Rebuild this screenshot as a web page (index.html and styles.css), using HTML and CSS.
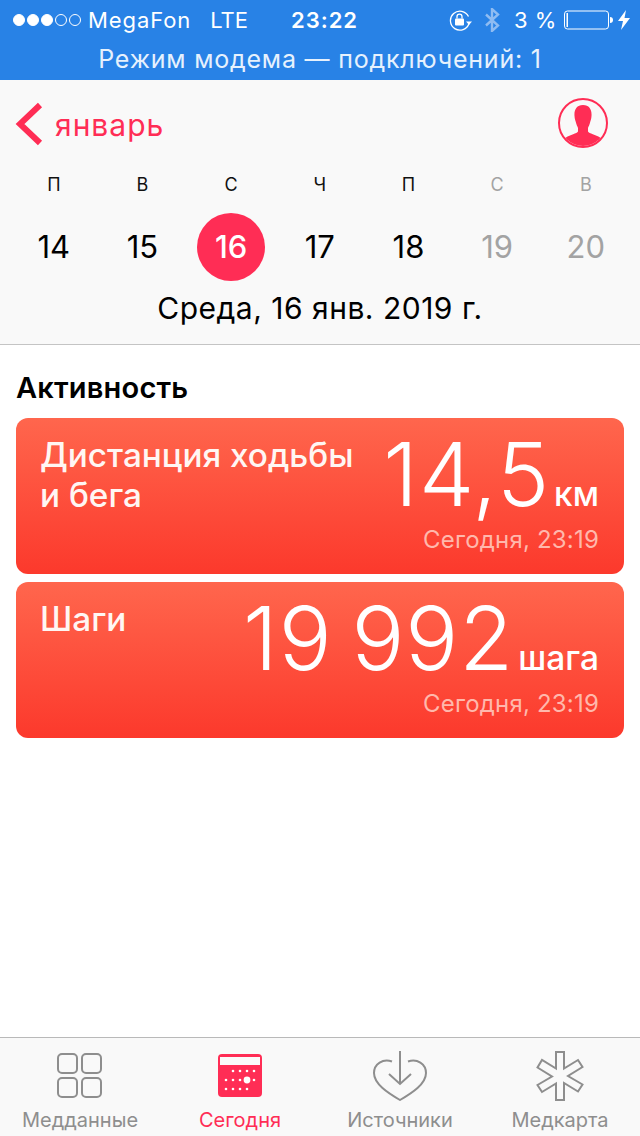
FILE: index.html
```html
<!DOCTYPE html>
<html lang="ru">
<head>
    <meta charset="UTF-8">
    <meta name="viewport" content="width=device-width, initial-scale=1.0">
    <title>Сегодня</title>
    <link rel="stylesheet" href="styles.css">
</head>
<body>
<div class="screen">

    <div class="topbar">
        <div class="status">
            <div class="status-left">
                <span class="dots"><i class="on"></i><i class="on"></i><i class="on"></i><i></i><i></i></span>
                <span class="carrier">MegaFon</span>
                <span class="net">LTE</span>
            </div>
            <div class="clock">23:22</div>
            <div class="status-right">
                <svg class="lock" width="26" height="22" viewBox="0 0 26 22">
                    <path d="M21 14.5A9.5 9.5 0 1 1 20.5 7.5" fill="none" stroke="#fff" stroke-width="1.3"/>
                    <path d="M18 12.5h6l-3 3.4z" fill="#fff"/>
                    <rect x="7" y="9.5" width="9" height="7" rx="1" fill="#fff"/>
                    <path d="M9 9.5V7.6a2.5 2.5 0 0 1 5 0v1.9" fill="none" stroke="#fff" stroke-width="1.3"/>
                </svg>
                <svg class="bt" width="16" height="24" viewBox="0 0 16 24">
                    <path d="M2 6.5l12 11-6 5.5V1l6 5.5-12 11" fill="none" stroke="#8fbcf2" stroke-width="2.4"/>
                </svg>
                <span class="percent">3 %</span>
                <svg class="battery" width="50" height="20" viewBox="0 0 50 20">
                    <rect x="0.5" y="1" width="44" height="18" rx="3" fill="none" stroke="#fff" stroke-width="1"/>
                    <rect x="2.5" y="3" width="1.5" height="14" fill="#fff"/>
                    <path d="M46 7c2 0 3 1 3 3s-1 3-3 3z" fill="#fff"/>
                </svg>
                <svg class="bolt" width="12" height="20" viewBox="0 0 12 20">
                    <path d="M8 0L0 11h5l-2 9 9-12H6.500z" fill="#fff"/>
                </svg>
            </div>
        </div>
        <div class="hotspot">Режим модема — подключений: 1</div>
    </div>

    <div class="calendar">
        <div class="cal-nav">
            <div class="back">
                <svg width="28" height="44" viewBox="0 0 28 44">
                    <path d="M25 3L5 22l20 19" fill="none" stroke="#ff2d55" stroke-width="6"/>
                </svg>
                <span>январь</span>
            </div>
            <svg class="profile" width="52" height="52" viewBox="0 0 52 52">
                <defs>
                    <clipPath id="ring"><circle cx="26" cy="26" r="23"/></clipPath>
                </defs>
                <circle cx="26" cy="26" r="24" fill="none" stroke="#ff2d55" stroke-width="2"/>
                <path clip-path="url(#ring)" d="M26 8c-6.500 0-9 5-8.500 11 .2 3 .8 4 1.300 6 .5 2.500 1.700 4.500 2.200 6v3.500c-1 2-8 3.500-12 6-2 1-3 3-3 6v6h40v-6c0-3-1-5-3-6-4-2.500-11-4-12-6V31c.5-1.500 1.700-3.500 2.200-6 .5-2 1.100-3 1.300-6 .5-6-2-11-8.500-11z" fill="#ff2d55"/>
            </svg>
        </div>
        <div class="week week-names">
            <span>П</span><span>В</span><span>С</span><span>Ч</span><span>П</span><span class="off">С</span><span class="off">В</span>
        </div>
        <div class="week week-days">
            <span>14</span><span>15</span><span class="today">16</span><span>17</span><span>18</span><span class="off">19</span><span class="off">20</span>
        </div>
        <div class="full-date">Среда, 16 янв. 2019 г.</div>
    </div>

    <div class="content">
        <h2>Активность</h2>
        <div class="card">
            <div class="card-title">Дистанция ходьбы<br>и бега</div>
            <div class="card-data">
                <div class="value">14,5<span class="unit">км</span></div>
                <div class="when">Сегодня, 23:19</div>
            </div>
        </div>
        <div class="card">
            <div class="card-title">Шаги</div>
            <div class="card-data">
                <div class="value">19 992<span class="unit">шага</span></div>
                <div class="when">Сегодня, 23:19</div>
            </div>
        </div>
    </div>

    <div class="tabs">
        <div class="tab">
            <svg width="46" height="46" viewBox="0 0 46 46" fill="none" stroke="#8e8e8e" stroke-width="2">
                <rect x="1" y="1" width="19" height="19" rx="4"/>
                <rect x="25" y="1" width="19" height="19" rx="4"/>
                <rect x="1" y="25" width="19" height="19" rx="4"/>
                <rect x="25" y="25" width="19" height="19" rx="4"/>
            </svg>
            <span>Медданные</span>
        </div>
        <div class="tab active">
            <svg width="46" height="46" viewBox="0 0 46 46">
                <rect x="1" y="1" width="44" height="43" rx="4" fill="#ff2d55"/>
                <rect x="3" y="4" width="40" height="8" fill="#fafafa"/>
                <g fill="#fff">
                    <circle cx="16" cy="18" r="1.300"/><circle cx="23" cy="18" r="1.300"/><circle cx="30" cy="18" r="1.300"/><circle cx="37" cy="18" r="1.300"/>
                    <circle cx="9" cy="27" r="1.300"/><circle cx="16" cy="27" r="1.300"/><circle cx="23" cy="27" r="1.300"/><circle cx="30" cy="27" r="3.400"/><circle cx="37" cy="27" r="1.300"/>
                    <circle cx="9" cy="36" r="1.300"/><circle cx="16" cy="36" r="1.300"/><circle cx="23" cy="36" r="1.300"/><circle cx="30" cy="36" r="1.300"/>
                </g>
            </svg>
            <span>Сегодня</span>
        </div>
        <div class="tab">
            <svg class="tall" width="56" height="50" viewBox="0 0 56 50" fill="none" stroke="#8e8e8e" stroke-width="2">
                <path d="M20 10.500C11 7 2 13 2 22c0 11 14 20 26 27 12-7 26-16 26-27 0-9-9-15-18-11.500"/>
                <path d="M28 0v33M17 23l11 10 11-10"/>
            </svg>
            <span>Источники</span>
        </div>
        <div class="tab">
            <svg class="tall" width="50" height="50" viewBox="0 0 50 50" fill="none" stroke="#8e8e8e" stroke-width="2">
                <path d="M21 1h8v16.500l14-8.500 4.500 7-14.500 9 14.500 8.500-4.500 7-14-8.500V49h-8V32.500L7 41l-4.500-7L17 25.500 2.500 16.500 7 9l14 8.500z"/>
            </svg>
            <span>Медкарта</span>
        </div>
    </div>

</div>
</body>
</html>
```

FILE: styles.css
```css
* {
    box-sizing: border-box;
}

body {
    margin: 0;
    padding: 0;
    font-family: 'Inter', 'Noto Sans', sans-serif;
    background-color: #fff;
}

.screen {
    width: 640px;
    height: 1136px;
    display: flex;
    flex-direction: column;
    overflow: hidden;
}

.topbar {
    height: 80px;
    background-color: #2882e6;
    color: #fff;
}

.status {
    height: 40px;
    padding: 0 10px 0 13px;
    display: flex;
    align-items: center;
    justify-content: space-between;
    font-size: 22px;
}

.status-left {
    width: 256px;
    display: flex;
    align-items: center;
}

.dots {
    display: flex;
    gap: 2px;
    margin-right: 7px;
}

.dots i {
    width: 12px;
    height: 12px;
    border-radius: 50%;
    border: 1px solid #fff;
}

.dots i.on {
    background-color: #fff;
}

.carrier {
    letter-spacing: 0.9px;
}

.net {
    margin-left: 19px;
}

.clock {
    font-weight: 600;
    letter-spacing: 1px;
}

.status-right {
    width: 250px;
    display: flex;
    align-items: center;
    justify-content: flex-end;
}

.status-right .bt {
    margin: 0 14px 0 10px;
}

.percent {
    margin-right: 7px;
    letter-spacing: 0.5px;
}

.battery {
    margin-right: 4px;
}

.hotspot {
    height: 40px;
    line-height: 38px;
    text-align: center;
    font-size: 25px;
    letter-spacing: 0.8px;
    color: #e6f1fd;
}

.calendar {
    height: 265px;
    background-color: #f9f9f9;
    border-bottom: 1px solid #c4c4c4;
}

.cal-nav {
    height: 86px;
    padding: 0 31px 0 15px;
    display: flex;
    align-items: center;
    justify-content: space-between;
}

.back {
    display: flex;
    align-items: center;
    gap: 12px;
    padding-top: 2px;
    color: #ff2d55;
    font-size: 30px;
    letter-spacing: 1px;
}

.back span {
    margin-top: 2px;
}

.week {
    display: grid;
    grid-template-columns: repeat(7, 88.67px);
    padding-left: 9.5px;
    text-align: center;
}

.week-names {
    height: 40px;
    margin-top: -1px;
    font-size: 18px;
    line-height: 40px;
    color: #111;
}

.week-days {
    height: 68px;
    margin-top: 8px;
    font-size: 31px;
    line-height: 68px;
    color: #000;
}

.week .off {
    color: #a3a3a3;
}

.week-days .today {
    width: 68px;
    height: 68px;
    margin: 0 auto;
    border-radius: 50%;
    background-color: #ff2d55;
    color: #fff;
    font-weight: 500;
}

.full-date {
    margin-top: 5px;
    text-align: center;
    font-size: 30px;
    line-height: 44px;
    letter-spacing: 0.5px;
    color: #000;
}

.content {
    flex: 1;
    padding: 0 16px;
}

.content h2 {
    margin: 25px 0 12px 0;
    font-size: 29px;
    line-height: 36px;
    font-weight: 600;
    letter-spacing: 0.2px;
    color: #000;
}

.card {
    height: 156px;
    margin-bottom: 8px;
    padding: 17px 25px 0 24px;
    display: flex;
    justify-content: space-between;
    border-radius: 12px;
    background: linear-gradient(#ff664d, #fc392c);
    color: #fff;
}

.card-title {
    font-size: 33.300px;
    line-height: 40px;
    font-weight: 500;
    color: #fff6f3;
}

.card-data {
    text-align: right;
}

.value {
    margin-top: -1px;
    font-size: 88px;
    line-height: 80px;
    font-weight: 300;
    letter-spacing: 1px;
    word-spacing: -7px;
}

.unit {
    margin-left: 4px;
    font-size: 33.500px;
    line-height: 1;
    font-weight: 500;
    letter-spacing: 0;
}

.when {
    margin-top: 11px;
    font-size: 24px;
    line-height: 30px;
    letter-spacing: 0.2px;
    color: #ffb8ac;
}

.tabs {
    height: 99px;
    display: grid;
    grid-template-columns: repeat(4, 160px);
    background-color: #f9f9f9;
    border-top: 1px solid #b9b9b9;
}

.tab {
    height: 98px;
    padding-top: 15px;
    display: flex;
    flex-direction: column;
    align-items: center;
    justify-content: space-between;
    font-size: 20px;
    color: #8e8e8e;
}

.tab svg {
    flex: none;
}

.tab svg.tall {
    margin-top: -2px;
}

.tab span {
    line-height: 32px;
}

.tab.active {
    color: #ff2d55;
}
```
